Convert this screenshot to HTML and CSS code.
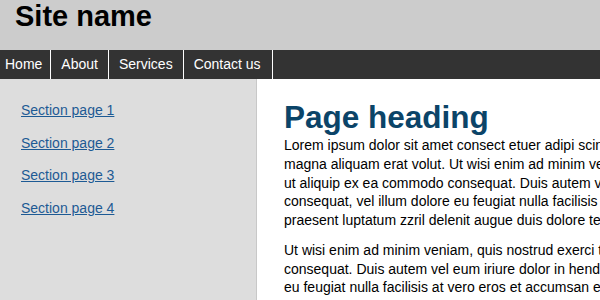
FILE: index.html
```html
<!DOCTYPE html>
<html lang="en">
<head>
    <meta charset="UTF-8">
    <meta name="viewport" content="width=device-width, initial-scale=1.0">
    <title>Site name</title>
    <link rel="stylesheet" href="styles.css">
</head>
<body>
    <header class="masthead">
        <h1 class="site-name">Site name</h1>
    </header>

    <nav class="topnav">
        <ul>
            <li><a href="#">Home</a></li>
            <li><a href="#">About</a></li>
            <li><a href="#">Services</a></li>
            <li><a href="#">Contact us</a></li>
        </ul>
    </nav>

    <div class="wrap">
        <aside class="sidebar">
            <ul>
                <li><a href="#">Section page 1</a></li>
                <li><a href="#">Section page 2</a></li>
                <li><a href="#">Section page 3</a></li>
                <li><a href="#">Section page 4</a></li>
            </ul>
        </aside>

        <main class="content">
            <h2>Page heading</h2>
            <p>Lorem ipsum dolor sit amet consect etuer adipi scing elit sed diam nonummy nibh euismod tincidunt ut laoreet dolore magna aliquam erat volut. Ut wisi enim ad minim veniam, quis nostrud exerci tation ullamcorper suscipit lobortis nisl ut aliquip ex ea commodo consequat. Duis autem vel eum iriure dolor in hendrerit in vulputate velit esse molestie consequat, vel illum dolore eu feugiat nulla facilisis at vero eros et accumsan et iusto odio dignissim qui blandit praesent luptatum zzril delenit augue duis dolore te feugait nulla facilisi.</p>
            <p>Ut wisi enim ad minim veniam, quis nostrud exerci tation ullamcorper suscipit lobortis nisl ut aliquip ex ea commodo consequat. Duis autem vel eum iriure dolor in hendrerit in vulputate velit esse molestie consequat, vel illum dolore eu&nbsp;feugiat nulla facilisis at vero eros et accumsan et iusto odio dignissim qui blandit praesent luptatum zzril delenit augue duis dolore te feugait nulla facilisi.</p>
        </main>
    </div>
</body>
</html>
```

FILE: styles.css
```css
html, body {
    overflow: hidden;
}

body {
    margin: 0;
    padding: 0;
    min-width: 1040px;
    font-family: "Liberation Sans", Arial, sans-serif;
    font-size: 14px;
    color: #000;
    background-color: #fff;
}

/* Header */
.masthead {
    height: 50px;
    background-color: #cccccc;
}

.site-name {
    margin: 0;
    padding-left: 15px;
    font-size: 29px;
    line-height: 32px;
    font-weight: bold;
    color: #000;
}

/* Top navigation */
.topnav {
    background-color: #333333;
    height: 29px;
}

.topnav ul {
    display: flex;
    margin: 0;
    padding: 0;
    list-style: none;
}

.topnav li {
    border-right: 1px solid #fff;
}

.topnav a {
    display: block;
    padding: 0 10px;
    font-size: 14px;
    line-height: 29px;
    color: #fff;
    text-decoration: none;
}

.topnav li:first-child a {
    padding: 0 8px 0 5px;
}

.topnav li:last-child a {
    padding-right: 11px;
}

/* Columns */
.wrap {
    display: flex;
    min-height: 222px;
}

.sidebar {
    width: 256px;
    flex-shrink: 0;
    background-color: #dddddd;
    border-right: 1px solid #c8c8c8;
}

.sidebar ul {
    margin: 0;
    padding: 15px 0 0 21px;
    list-style: none;
}

.sidebar li {
    padding: 7px 0;
    line-height: 18.67px;
}

.sidebar a {
    color: #1d5a94;
    text-decoration: underline;
}

.content {
    width: 726px;
    padding: 20px 0 0 27px;
}

.content h2 {
    margin: 0;
    font-size: 31.5px;
    font-weight: bold;
    color: #0b4468;
}

.content p {
    margin: 0 0 11px;
    line-height: 18.75px;
}
```
